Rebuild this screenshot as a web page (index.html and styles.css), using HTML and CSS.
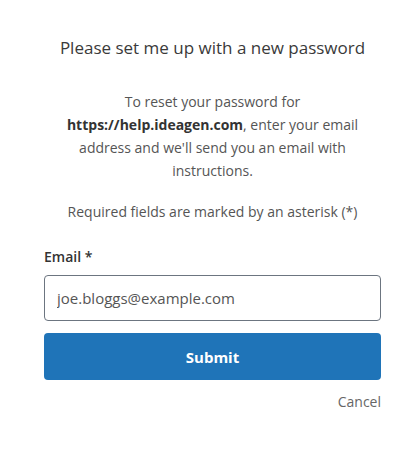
FILE: index.html
```html
<!DOCTYPE html>
<html>
<head>
<meta charset="utf-8">
<link rel="stylesheet" href="styles.css">
</head>
<body>
<main class="card">
  <h1 class="title">Please set me up with a new password</h1>
  <p class="intro">To reset your password for <strong>https://help.ideagen.com</strong>, enter your email address and we'll send you an email with instructions.</p>
  <p class="note">Required fields are marked by an asterisk (*)</p>
  <form class="form">
    <label class="label" for="email">Email *</label>
    <input class="input" id="email" type="text" placeholder="joe.bloggs@example.com">
    <button class="submit" type="button">Submit</button>
    <div class="actions"><a class="cancel" href="#">Cancel</a></div>
  </form>
</main>
</body>
</html>
```
FILE: styles.css
```css
* { box-sizing: border-box; }
html, body { margin: 0; background: #fff; }
body { font-family: "Open Sans", "Noto Sans", sans-serif; color: #555; }
.card { padding: 36px 38px 0 44px; }
.title { margin: 0; font-size: 17px; font-weight: 400; color: #3a3a3a; text-align: center; line-height: 24px; }
.intro { margin: 30px 10px 0; font-size: 14px; line-height: 23px; text-align: center; color: #555; }
.intro strong { color: #333; font-weight: 700; }
.note { margin: 19px 0 0; font-size: 14px; line-height: 22px; text-align: center; color: #555; }
.form { display: flex; flex-direction: column; margin-top: 24px; }
.label { font-size: 14px; font-weight: 600; color: #333; line-height: 20px; }
.input { margin-top: 8px; height: 46px; border: 1px solid #6c7580; border-radius: 4px; padding: 0 12px; font-family: inherit; font-size: 15px; color: #333; }
.input::placeholder { color: #555; }
.submit { margin-top: 12px; height: 47px; border: 0; border-radius: 4px; background: #1f74b8; color: #fff; font-family: inherit; font-size: 15px; font-weight: 700; }
.actions { display: flex; justify-content: flex-end; margin-top: 12px; }
.cancel { font-size: 14px; color: #666; text-decoration: none; line-height: 20px; }
```
